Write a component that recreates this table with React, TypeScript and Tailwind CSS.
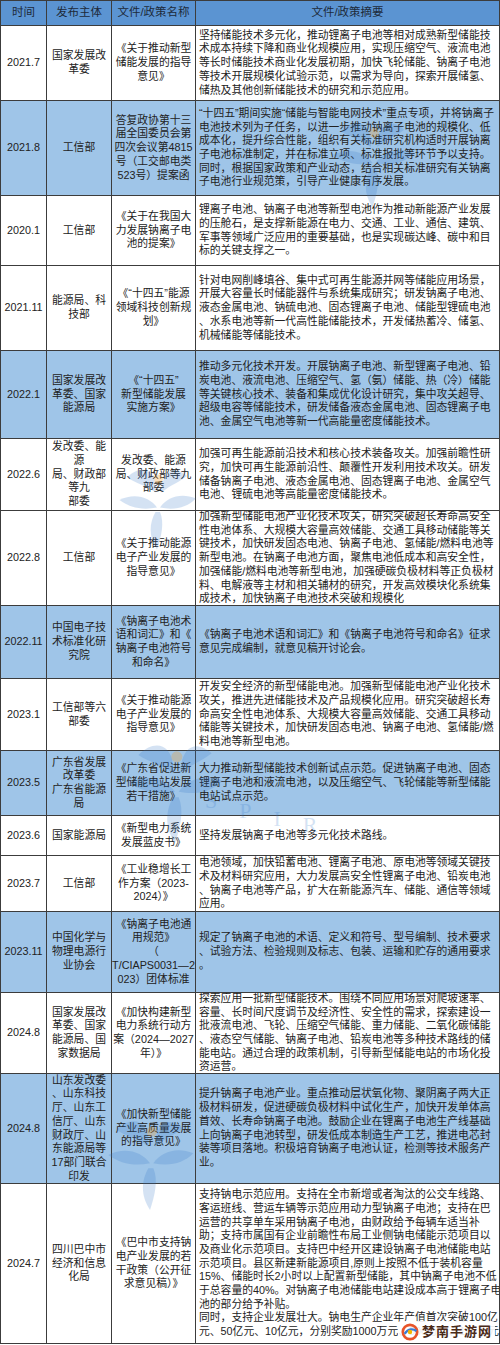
import React from "react";

type Row = {
  time: string;
  h: string;
  blue?: boolean;
  org: string[];
  doc: string[];
  sum: string[];
};

const rows: Row[] = [
  {
    time: "2021.7",
    h: "h-[75px]",
    org: ["国家发展改", "革委"],
    doc: ["《关于推动新型", "储能发展的指导", "意见》"],
    sum: [
      "坚持储能技术多元化，推动锂离子电池等相对成熟新型储能技",
      "术成本持续下降和商业化规模应用，实现压缩空气、液流电池",
      "等长时储能技术商业化发展初期，加快飞轮储能、钠离子电池",
      "等技术开展规模化试验示范，以需求为导向，探索开展储氢、",
      "储热及其他创新储能技术的研究和示范应用。",
    ],
  },
  {
    time: "2021.8",
    h: "h-[95px]",
    blue: true,
    org: ["工信部"],
    doc: ["答复政协第十三", "届全国委员会第", "四次会议第4815", "号（工交邮电类", "523号）提案函"],
    sum: [
      "“十四五”期间实施“储能与智能电网技术”重点专项，并将钠离子",
      "电池技术列为子任务，以进一步推动钠离子电池的规模化、低",
      "成本化，提升综合性能，组织有关标准研究机构适时开展钠离",
      "子电池标准制定，并在标准立项、标准报批等环节予以支持。",
      "同时，根据国家政策和产业动态，结合相关标准研究有关钠离",
      "子电池行业规范策，引导产业健康有序发展。",
    ],
  },
  {
    time: "2020.1",
    h: "h-[70px]",
    org: ["工信部"],
    doc: ["《关于在我国大", "力发展钠离子电", "池的提案》"],
    sum: [
      "锂离子电池、钠离子电池等新型电池作为推动新能源产业发展",
      "的压舱石，是支撑新能源在电力、交通、工业、通信、建筑、",
      "军事等领域广泛应用的重要基础，也是实现碳达峰、碳中和目",
      "标的关键支撑之一。",
    ],
  },
  {
    time: "2021.11",
    h: "h-[85px]",
    org: ["能源局、科", "技部"],
    doc: ["《“十四五”能源", "领域科技创新规", "划》"],
    sum: [
      "针对电网削峰填谷、集中式可再生能源并网等储能应用场景，",
      "开展大容量长时储能器件与系统集成研究；研发钠离子电池、",
      "液态金属电池、钠硫电池、固态锂离子电池、储能型锂硫电池",
      "、水系电池等新一代高性能储能技术，开发储热蓄冷、储氢、",
      "机械储能等储能技术。",
    ],
  },
  {
    time: "2022.1",
    h: "h-[88px]",
    blue: true,
    org: ["国家发展改", "革委、国家", "能源局"],
    doc: ["《“十四五”", "新型储能发展", "实施方案》"],
    sum: [
      "推动多元化技术开发。开展钠离子电池、新型锂离子电池、铅",
      "炭电池、液流电池、压缩空气、氢（氨）储能、热（冷）储能",
      "等关键核心技术、装备和集成优化设计研究，集中攻关超导、",
      "超级电容等储能技术，研发储备液态金属电池、固态锂离子电",
      "池、金属空气电池等新一代高能量密度储能技术。",
    ],
  },
  {
    time: "2022.6",
    h: "h-[72px]",
    org: ["发改委、能", "源", "局、财政部", "等九", "部委"],
    doc: ["发改委、能源", "局、财政部等九", "部委"],
    sum: [
      "加强可再生能源前沿技术和核心技术装备攻关。加强前瞻性研",
      "究，加快可再生能源前沿性、颠覆性开发利用技术攻关。研发",
      "储备钠离子电池、液态金属电池、固态锂离子电池、金属空气",
      "电池、锂硫电池等高能量密度储能技术。",
    ],
  },
  {
    time: "2022.8",
    h: "h-[95px]",
    org: ["工信部"],
    doc: ["《关于推动能源", "电子产业发展的", "指导意见》"],
    sum: [
      "加强新型储能电池产业化技术攻关，研究突破超长寿命高安全",
      "性电池体系、大规模大容量高效储能、交通工具移动储能等关",
      "键技术，加快研发固态电池、钠离子电池、氢储能/燃料电池等",
      "新型电池。在钠离子电池方面，聚焦电池低成本和高安全性，",
      "加强储能/燃料电池等新型电池，加强硬碳负极材料等正负极材",
      "料、电解液等主材和相关辅材的研究，开发高效模块化系统集",
      "成技术，加快钠离子电池技术突破和规模化",
    ],
  },
  {
    time: "2022.11",
    h: "h-[73px]",
    blue: true,
    org: ["中国电子技", "术标准化研", "究院"],
    doc: ["《钠离子电池术", "语和词汇》和《", "钠离子电池符号", "和命名》"],
    sum: [
      "《钠离子电池术语和词汇》和《钠离子电池符号和命名》征求",
      "意见完成编制，就意见稿开讨论会。",
    ],
  },
  {
    time: "2023.1",
    h: "h-[72px]",
    org: ["工信部等六", "部委"],
    doc: ["《关于推动能源", "电子产业发展的", "指导意见》"],
    sum: [
      "开发安全经济的新型储能电池。加强新型储能电池产业化技术",
      "攻关，推进先进储能技术及产品规模化应用。研究突破超长寿",
      "命高安全性电池体系、大规模大容量高效储能、交通工具移动",
      "储能等关键技术，加快研发固态电池、钠离子电池、氢储能/燃",
      "料电池等新型电池。",
    ],
  },
  {
    time: "2023.5",
    h: "h-[65px]",
    blue: true,
    org: ["广东省发展", "改革委", "广东省能源", "局"],
    doc: ["《广东省促进新", "型储能电站发展", "若干措施》"],
    sum: [
      "大力推动新型储能技术创新试点示范。促进钠离子电池、固态",
      "锂离子电池和液流电池，以及压缩空气、飞轮储能等新型储能",
      "电站试点示范。",
    ],
  },
  {
    time: "2023.6",
    h: "h-[40px]",
    org: ["国家能源局"],
    doc: ["《新型电力系统", "发展蓝皮书》"],
    sum: ["坚持发展钠离子电池等多元化技术路线。"],
  },
  {
    time: "2023.7",
    h: "h-[56px]",
    org: ["工信部"],
    doc: ["《工业稳增长工", "作方案（2023-", "2024）》"],
    sum: [
      "电池领域，加快铅蓄电池、锂离子电池、原电池等领域关键技",
      "术及材料研究应用，大力发展高安全性锂离子电池、铅炭电池",
      "、钠离子电池等产品，扩大在新能源汽车、储能、通信等领域",
      "应用。",
    ],
  },
  {
    time: "2023.11",
    h: "h-[81px]",
    blue: true,
    org: ["中国化学与", "物理电源行", "业协会"],
    doc: ["《钠离子电池通", "用规范》", "（", "T/CIAPS0031—2", "023）团体标准"],
    sum: [
      "规定了钠离子电池的术语、定义和符号、型号编制、技术要求",
      "、试验方法、检验规则及标志、包装、运输和贮存的通用要求",
      "。",
    ],
  },
  {
    time: "2024.8",
    h: "h-[81px]",
    org: ["国家发展改", "革委、国家", "能源局、国", "家数据局"],
    doc: ["《加快构建新型", "电力系统行动方", "案（2024—2027", "年）》"],
    sum: [
      "探索应用一批新型储能技术。围绕不同应用场景对爬坡速率、",
      "容量、长时间尺度调节及经济性、安全性的需求，探索建设一",
      "批液流电池、飞轮、压缩空气储能、重力储能、二氧化碳储能",
      "、液态空气储能、钠离子电池、铅炭电池等多种技术路线的储",
      "能电站。通过合理的政策机制，引导新型储能电站的市场化投",
      "资运营。",
    ],
  },
  {
    time: "2024.8",
    h: "h-[110px]",
    blue: true,
    org: ["山东发改委", "、山东科技", "厅、山东工", "信厅、山东", "财政厅、山", "东能源局等", "17部门联合", "印发"],
    doc: ["《加快新型储能", "产业高质量发展", "的指导意见》"],
    sum: [
      "提升钠离子电池产业。重点推动层状氧化物、聚阴离子两大正",
      "极材料研发，促进硬碳负极材料中试化生产，加快开发单体高",
      "首效、长寿命钠离子电池。鼓励企业在锂离子电池生产线基础",
      "上向钠离子电池转型，研发低成本制造生产工艺，推进电芯封",
      "装等项目落地。积极培育钠离子电池认证，检测等技术服务产",
      "业。",
    ],
  },
  {
    time: "2024.7",
    h: "h-[160px]",
    org: ["四川巴中市", "经济和信息", "化局"],
    doc: ["《巴中市支持钠", "电产业发展的若", "干政策（公开征", "求意见稿）》"],
    sum: [
      "支持钠电示范应用。支持在全市新增或者淘汰的公交车线路、",
      "客运班线、营运车辆等示范应用动力型钠离子电池；支持在巴",
      "运营的共享单车采用钠离子电池，由财政给予每辆车适当补",
      "助；支持市属国有企业前瞻性布局工业侧钠电储能示范项目以",
      "及商业化示范项目。支持巴中经开区建设钠离子电池储能电站",
      "示范项目。县区新建新能源项目,原则上按照不低于装机容量",
      "15%、储能时长2小时以上配置新型储能，其中钠离子电池不低",
      "于总容量的40%。对钠离子电池储能电站建设成本高于锂离子电",
      "池的部分给予补贴。",
      "同时，支持企业发展壮大。钠电生产企业年产值首次突破100亿",
      "元、50亿元、10亿元，分别奖励1000万元、500万元、100万元",
    ],
  },
];

const Lines = ({ lines }: { lines: string[] }) => (
  <>
    {lines.map((l, i) => (
      <div key={i} className="whitespace-nowrap">
        {l}
      </div>
    ))}
  </>
);

// faint logo watermark laid over the table
const Mark = ({ className }: { className: string }) => (
  <svg viewBox="0 0 120 140" className={`pointer-events-none absolute ${className}`}>
    <g fill="#2f74c8" opacity="0.2">
      <path d="M20 40 C40 20 60 30 58 60 C45 50 32 48 20 40 Z" />
      <path d="M100 38 C82 22 66 32 66 60 C78 50 90 46 100 38 Z" />
      <path d="M10 70 C30 60 50 66 60 80 C40 84 24 80 10 70 Z" />
      <path d="M112 68 C92 60 74 66 64 80 C84 84 100 80 112 68 Z" />
      <path d="M58 86 C50 100 48 118 60 136 C66 118 70 100 64 86 Z" />
    </g>
    <circle cx="62" cy="42" r="6" fill="#f0a030" opacity="0.3" />
  </svg>
);

const Letters = ({ className }: { className: string }) => (
  <div
    className={`pointer-events-none absolute flex gap-[22px] font-['Liberation_Serif',serif] text-[22px] leading-none text-[#2f74c8] opacity-20 ${className}`}
  >
    <span>S</span>
    <span className="mt-[10px]">P</span>
    <span className="mt-[18px]">I</span>
    <span className="mt-[24px]">R</span>
  </div>
);

export default function App() {
  return (
    <div className="relative w-[500px] h-[1345px] overflow-hidden bg-white font-['Liberation_Sans','Noto_Sans_CJK_SC',sans-serif] text-[10.8px] leading-[13.7px] text-[#222]">
      <div className="border-l border-t border-[#3c3c3c]">
        {/* header */}
        <div className="grid h-[25px] grid-cols-[46px_65px_84px_1fr] bg-[#5b94d2] text-[11.5px] text-[#1d2a3a]">
          <div className="flex items-center justify-center border-r border-b border-[#3c3c3c]">时间</div>
          <div className="flex items-center justify-center border-r border-b border-[#3c3c3c]">发布主体</div>
          <div className="flex items-center justify-center border-r border-b border-[#3c3c3c]">文件/政策名称</div>
          <div className="flex items-center justify-center border-r border-b border-[#3c3c3c]">文件/政策摘要</div>
        </div>

        {rows.map((r, i) => (
          <div
            key={i}
            className={`grid grid-cols-[46px_65px_84px_1fr] ${r.h} ${r.blue ? "bg-[#9fc5e8]" : "bg-white"}`}
          >
            <div className="flex items-center justify-center border-r border-b border-[#3c3c3c]">
              {r.time}
            </div>
            <div className="flex flex-col items-center justify-center overflow-hidden border-r border-b border-[#3c3c3c] text-center">
              <Lines lines={r.org} />
            </div>
            <div className="flex flex-col items-center justify-center overflow-hidden border-r border-b border-[#3c3c3c] text-center">
              <Lines lines={r.doc} />
            </div>
            <div className="flex flex-col justify-center overflow-hidden border-r border-b border-[#3c3c3c] pl-[3px]">
              <Lines lines={r.sum} />
            </div>
          </div>
        ))}
      </div>

      <Mark className="left-[325px] top-[95px] w-[95px] h-[120px]" />
      <Mark className="left-[112px] top-[440px] w-[90px] h-[120px]" />
      <Mark className="left-[120px] top-[715px] w-[110px] h-[135px]" />
      <Mark className="left-[100px] top-[1080px] w-[100px] h-[150px]" />
      <Letters className="left-[205px] top-[790px]" />
      <Letters className="left-[270px] top-[1100px]" />

      {/* site badge bottom right */}
      <div className="absolute left-[398px] top-[1321px] flex h-[22px] items-center gap-[3px] rounded-[3px] bg-white/90 px-[3px]">
        <svg viewBox="0 0 20 20" className="h-[18px] w-[18px]">
          <circle cx="10" cy="10" r="8" fill="none" stroke="#e8542a" strokeWidth="3" />
          <path d="M4 12 C8 6 14 6 17 9" fill="none" stroke="#3a7bd5" strokeWidth="2.5" />
          <circle cx="10" cy="10" r="2.5" fill="#f4b400" />
        </svg>
        <span className="font-bold text-[13px] text-[#4a2a18] tracking-[1px]">梦南手游网</span>
      </div>
    </div>
  );
}
